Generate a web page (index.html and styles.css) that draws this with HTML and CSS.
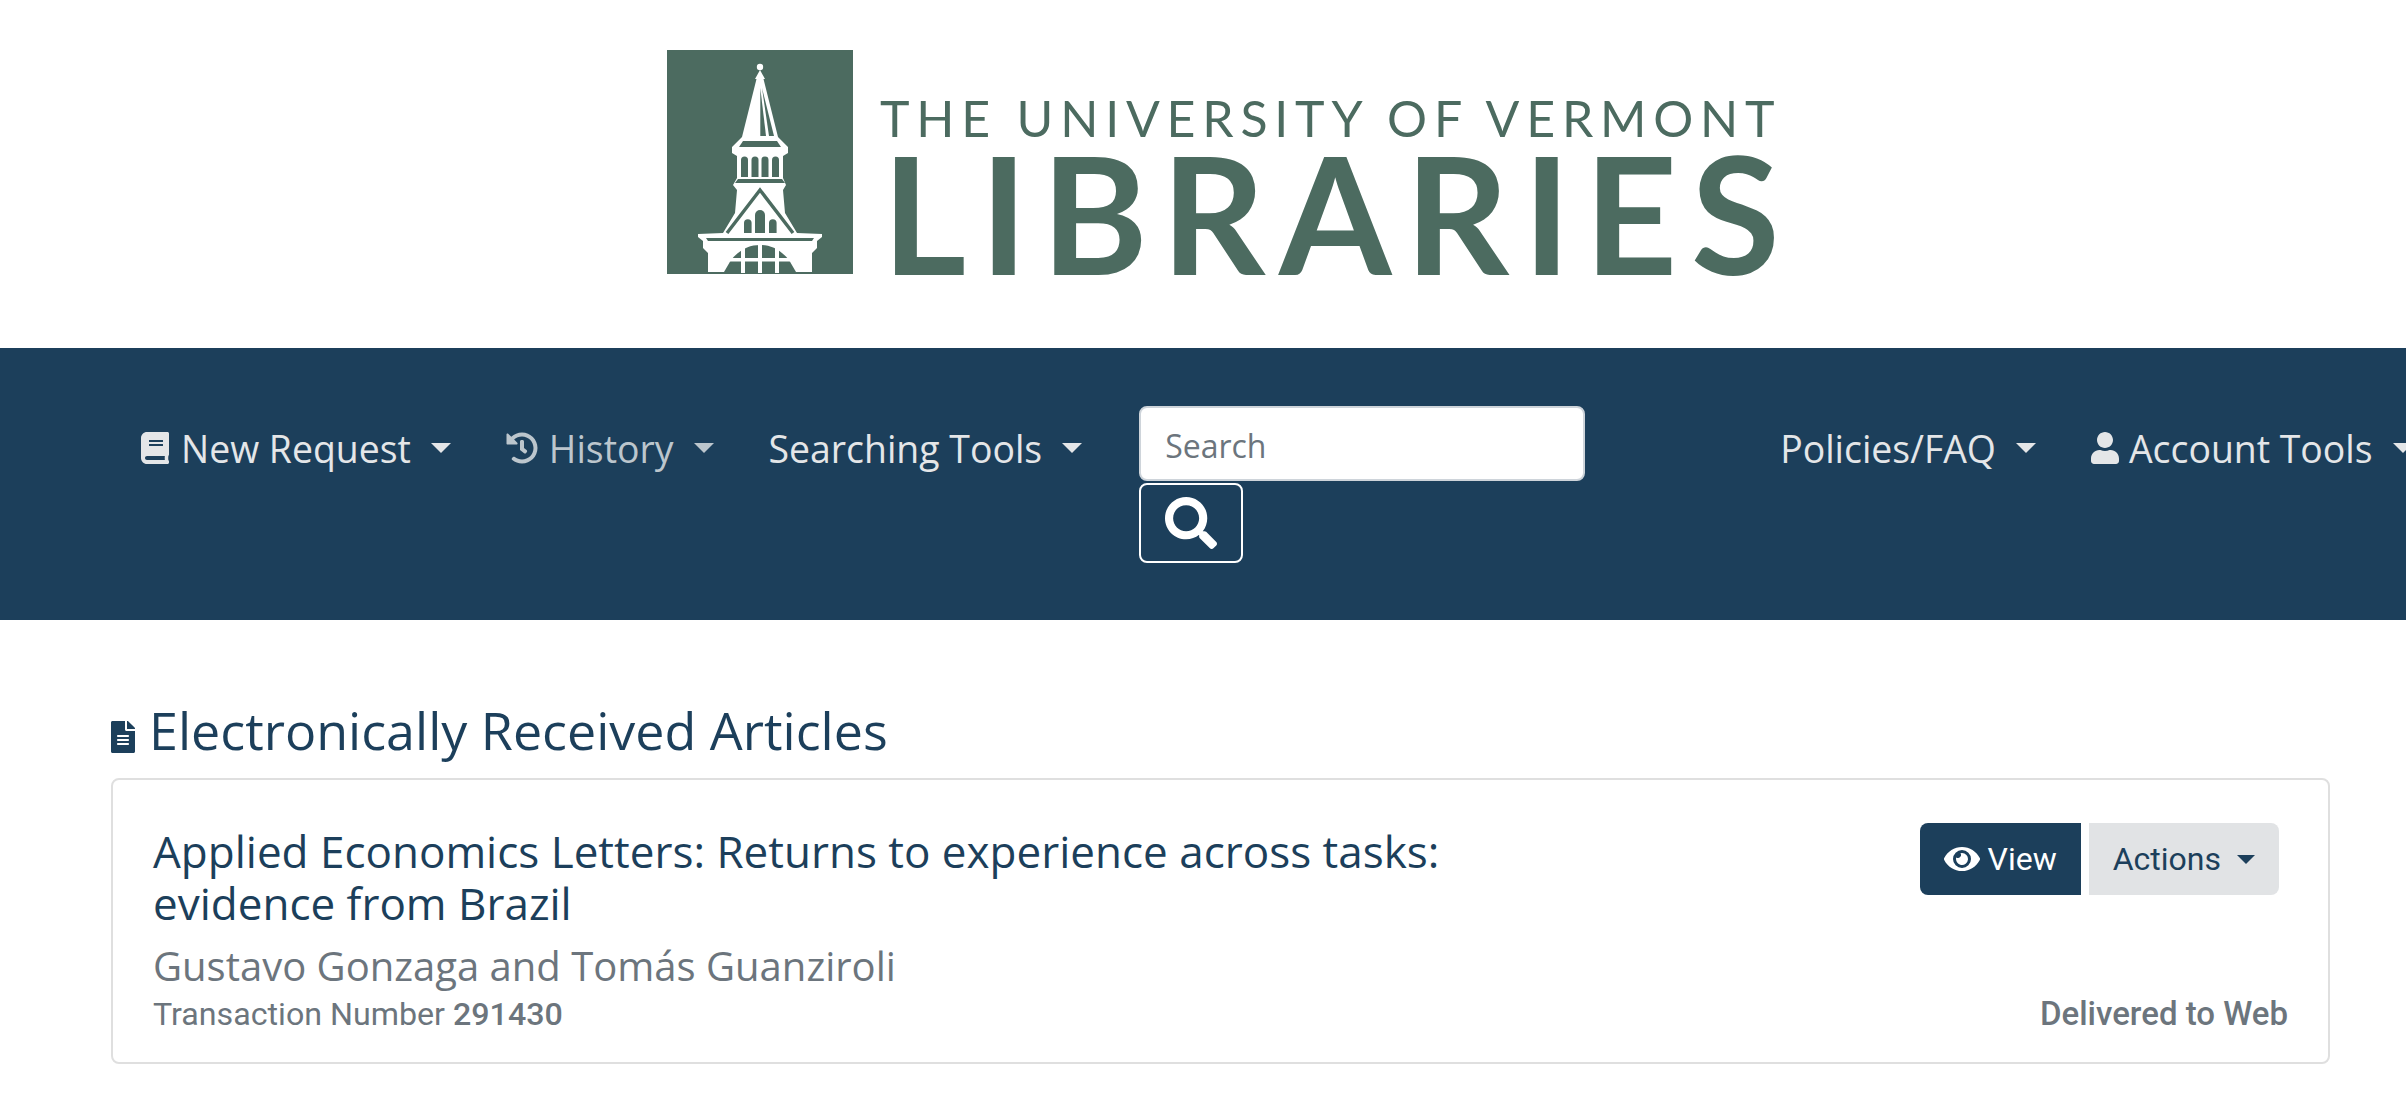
FILE: index.html
```html
<!DOCTYPE html>
<html lang="en">
<head>
    <meta charset="UTF-8">
    <meta name="viewport" content="width=device-width, initial-scale=1.0">
    <title>Electronically Received Articles</title>
    <link rel="stylesheet" href="styles.css">
</head>
<body>
    <div class="logo-bar">
        <svg class="logo-mark" viewBox="667 50 186 224" preserveAspectRatio="none">
            <rect x="667" y="50" width="186" height="224" fill="#4c6b60"/>
            <!-- tower silhouette -->
            <circle cx="760" cy="67" r="3.2" fill="#fff"/>
            <path fill="#fff" d="M760 70 L765 79 L763.5 79 L778 137 L788 147 L788 153 L783 156 L783 178 L786 185 L783 190 L785 213 L797 233 L822 234 L822 237 L817 241 L817 248 L812 253 L812 272 L708 272 L708 253 L703 248 L703 241 L698 237 L698 234 L723 233 L735 213 L737 190 L733 185 L737 178 L737 156 L732 153 L732 147 L742 137 L756.5 79 L755 79 Z"/>
            <!-- spire slivers and bands -->
            <g fill="#4c6b60">
                <path d="M760.3 88 L766 136 L760.3 136 Z"/>
                <path d="M762 88 L774 136 L769 136 Z"/>
                <path d="M743 141 L777 141 L781 147 L739 147 Z"/>
                <path d="M741 160 a3.5 3.5 0 0 1 7 0 V177 H741 Z"/>
                <path d="M751.5 160 a3.5 3.5 0 0 1 7 0 V177 H751.5 Z"/>
                <path d="M761.5 160 a3.5 3.5 0 0 1 7 0 V177 H761.5 Z"/>
                <path d="M772 160 a3.5 3.5 0 0 1 7 0 V177 H772 Z"/>
                <path d="M738 179 L782 179 L785 183 L735 183 Z"/>
                <path d="M744 233 V223 a3.8 3.8 0 0 1 7.6 0 V233 Z"/>
                <path d="M755 233 V215 a5 5 0 0 1 10 0 V233 Z"/>
                <path d="M769 233 V223 a3.8 3.8 0 0 1 7.6 0 V233 Z"/>
                <path d="M706 238 L814 238 L812 241 L708 241 Z"/>
                <path d="M731 260 C740 249 750 245 760 245 C770 245 780 249 789 260 L796 272 L724 272 Z"/>
            </g>
            <path d="M727 233 L760 190 L793 233" fill="none" stroke="#4c6b60" stroke-width="3.4"/>
            <g fill="#fff">
                <rect x="741" y="246" width="4" height="27"/>
                <rect x="758" y="244" width="4" height="29"/>
                <rect x="775" y="246" width="4" height="27"/>
                <rect x="730" y="258" width="60" height="3.5"/>
            </g>
        </svg>
        <div class="logo-text">
            <div class="logo-top">THE UNIVERSITY OF VERMONT</div>
            <div class="logo-main">LIBRARIES</div>
        </div>
    </div>

    <nav class="navbar">
        <a href="#new" class="nav-link">
            <svg class="icon book" viewBox="0 0 448 512"><path d="M448 360V24c0-13.3-10.7-24-24-24H96C43 0 0 43 0 96v320c0 53 43 96 96 96h328c13.3 0 24-10.7 24-24v-16c0-7.5-3.5-14.3-8.9-18.7-4.2-15.4-4.2-59.3 0-74.7 5.4-4.3 8.9-11.1 8.9-18.6zM128 134c0-3.3 2.7-6 6-6h212c3.3 0 6 2.7 6 6v20c0 3.3-2.7 6-6 6H134c-3.3 0-6-2.7-6-6v-20zm0 64c0-3.3 2.7-6 6-6h212c3.3 0 6 2.7 6 6v20c0 3.3-2.7 6-6 6H134c-3.3 0-6-2.7-6-6v-20zm253.4 250H96c-17.7 0-32-14.3-32-32 0-17.6 14.4-32 32-32h285.4c-1.9 17.1-1.9 46.9 0 64z"/></svg>
            New Request<span class="caret"></span>
        </a>
        <a href="#history" class="nav-link dim">
            <svg class="icon history" viewBox="0 0 512 512"><path d="M504 255.531c.253 136.64-111.18 248.372-247.82 248.468-59.015.042-113.223-20.53-155.822-54.911-11.077-8.94-11.905-25.541-1.839-35.607l11.267-11.267c8.609-8.609 22.353-9.551 31.891-1.984C173.062 425.135 212.781 440 256 440c101.705 0 184-82.311 184-184 0-101.705-82.311-184-184-184-48.814 0-93.149 18.969-126.068 49.932l50.754 50.754c10.08 10.08 2.941 27.314-11.313 27.314H24c-8.837 0-16-7.163-16-16V38.627c0-14.254 17.234-21.393 27.314-11.314l49.372 49.372C129.209 34.136 189.552 8 256 8c136.81 0 247.747 110.78 248 247.531zm-180.912 78.784l9.823-12.63c8.138-10.463 6.253-25.542-4.21-33.679L288 256.349V152c0-13.255-10.745-24-24-24h-16c-13.255 0-24 10.745-24 24v135.651l65.409 50.874c10.463 8.137 25.541 6.253 33.679-4.21z"/></svg>
            History<span class="caret"></span>
        </a>
        <a href="#tools" class="nav-link">Searching Tools<span class="caret"></span></a>
        <form class="search-form">
            <input type="text" class="search-input" placeholder="Search">
            <button type="button" class="search-btn">
                <svg viewBox="0 0 512 512"><path d="M505 442.7L405.3 343c-4.5-4.5-10.6-7-17-7H372c27.6-35.3 44-79.7 44-128C416 93.1 322.9 0 208 0S0 93.1 0 208s93.1 208 208 208c48.3 0 92.7-16.4 128-44v16.3c0 6.4 2.5 12.5 7 17l99.7 99.7c9.4 9.4 24.6 9.4 33.9 0l28.3-28.3c9.4-9.4 9.4-24.6.1-34zM208 336c-70.7 0-128-57.2-128-128 0-70.7 57.2-128 128-128 70.7 0 128 57.2 128 128 0 70.7-57.2 128-128 128z"/></svg>
            </button>
        </form>
        <a href="#faq" class="nav-link policies">Policies/FAQ<span class="caret"></span></a>
        <a href="#account" class="nav-link account">
            <svg class="icon user" viewBox="0 0 448 512"><path d="M224 256c70.7 0 128-57.3 128-128S294.7 0 224 0 96 57.3 96 128s57.3 128 128 128zm89.6 32h-16.7c-22.2 10.2-46.9 16-72.9 16s-50.6-5.8-72.9-16h-16.7C60.2 288 0 348.2 0 422.4V464c0 26.5 21.5 48 48 48h352c26.5 0 48-21.5 48-48v-41.6c0-74.2-60.2-134.4-134.4-134.4z"/></svg>
            Account Tools<span class="caret"></span>
        </a>
    </nav>

    <div class="main-content">
        <h1 class="section-title">
            <svg class="file-icon" viewBox="0 0 384 512"><path d="M224 136V0H24C10.7 0 0 10.7 0 24v464c0 13.3 10.7 24 24 24h336c13.3 0 24-10.7 24-24V160H248c-13.2 0-24-10.8-24-24zm64 236c0 6.6-5.4 12-12 12H108c-6.6 0-12-5.4-12-12v-8c0-6.6 5.4-12 12-12h168c6.6 0 12 5.4 12 12v8zm0-64c0 6.6-5.4 12-12 12H108c-6.6 0-12-5.4-12-12v-8c0-6.6 5.4-12 12-12h168c6.6 0 12 5.4 12 12v8zm0-72v8c0 6.6-5.4 12-12 12H108c-6.6 0-12-5.4-12-12v-8c0-6.6 5.4-12 12-12h168c6.6 0 12 5.4 12 12zm96-114.1v6.1H256V0h6.1c6.4 0 12.5 2.5 17 7l97.9 98c4.5 4.5 7 10.6 7 16.9z"/></svg>
            Electronically Received Articles
        </h1>
        <div class="card">
            <div class="card-info">
                <h2 class="card-title">Applied Economics Letters: Returns to experience across tasks:<br>evidence from Brazil</h2>
                <p class="card-author">Gustavo Gonzaga and Tomás Guanziroli</p>
                <p class="card-meta">Transaction Number <strong>291430</strong></p>
            </div>
            <div class="card-side">
                <div class="card-actions">
                    <a href="#view" class="btn btn-view">
                        <svg class="eye" viewBox="0 0 576 512"><path d="M572.52 241.4C518.29 135.59 410.93 64 288 64S57.68 135.64 3.48 241.41a32.35 32.35 0 0 0 0 29.19C57.71 376.41 165.07 448 288 448s230.32-71.64 284.52-177.41a32.35 32.35 0 0 0 0-29.19zM288 400a144 144 0 1 1 144-144 143.93 143.93 0 0 1-144 144zm0-240a95.31 95.31 0 0 0-25.31 3.79 47.85 47.85 0 0 1-66.9 66.9A95.78 95.78 0 1 0 288 160z"/></svg>
                        View
                    </a>
                    <a href="#actions" class="btn btn-actions">Actions<span class="caret"></span></a>
                </div>
                <div class="card-status">Delivered to Web</div>
            </div>
        </div>
    </div>
</body>
</html>
```

FILE: styles.css
```css
html, body {
    overflow-x: hidden;
}

body {
    margin: 0;
    padding: 0;
    font-family: "Open Sans", sans-serif;
    background-color: white;
    color: #1c3f5b;
}

.logo-bar {
    display: flex;
    height: 348px;
    box-sizing: border-box;
    padding: 50px 0 0 667px;
}

.logo-mark {
    width: 186px;
    height: 224px;
    flex-shrink: 0;
}

.logo-text {
    margin-left: 27px;
    font-family: Lato, sans-serif;
    color: #4c6b60;
    white-space: nowrap;
}

.logo-top {
    margin-top: 43px;
    font-size: 50px;
    line-height: 50px;
    letter-spacing: 6.8px;
}

.logo-main {
    margin: 3px 0 0 2px;
    font-size: 162px;
    line-height: 134px;
    font-weight: 700;
    letter-spacing: 13.5px;
}

.navbar {
    display: flex;
    align-items: flex-start;
    height: 272px;
    box-sizing: border-box;
    padding: 58px 0 0 141px;
    background-color: #1c3f5b;
    white-space: nowrap;
}

.nav-link {
    display: flex;
    align-items: center;
    height: 60px;
    margin: 12px 55px 0 0;
    color: #e4e6e8;
    font-size: 37.4px;
    text-decoration: none;
}

.nav-link.dim {
    color: #bcc6cd;
}

.caret {
    display: inline-block;
    margin-left: 20px;
    border-top: 10px solid currentColor;
    border-left: 10px solid transparent;
    border-right: 10px solid transparent;
}

.icon {
    fill: currentColor;
    flex-shrink: 0;
}

.icon.book {
    width: 28px;
    height: 32px;
    margin-right: 12px;
}

.icon.history {
    width: 32px;
    height: 32px;
    margin-right: 11px;
}

.icon.user {
    width: 28px;
    height: 32px;
    margin-right: 10px;
}

.search-form {
    display: flex;
    flex-direction: column;
    align-items: flex-start;
    margin-left: 2px;
}

.search-input {
    width: 446px;
    height: 75px;
    box-sizing: border-box;
    padding: 4px 24px 0 24px;
    border: 2px solid #ced4da;
    border-radius: 8px;
    font-family: "Open Sans", sans-serif;
    font-size: 32px;
    background-color: white;
}

.search-input::placeholder {
    color: #6c757d;
}

.search-btn {
    width: 104px;
    height: 80px;
    margin-top: 2px;
    padding: 0;
    display: flex;
    align-items: center;
    justify-content: center;
    background: none;
    border: 2px solid white;
    border-radius: 8px;
}

.search-btn svg {
    width: 52px;
    height: 52px;
    fill: white;
}

.nav-link.policies {
    margin-left: 195px;
}

.main-content {
    padding: 74px 76px 0 111px;
}

.section-title {
    display: flex;
    align-items: center;
    margin: 0 0 12px 0;
    font-size: 52px;
    font-weight: 400;
    line-height: 72px;
}

.file-icon {
    width: 24px;
    height: 32px;
    margin: 14px 14px 0 0;
    fill: #1c3f5b;
}

.card {
    display: flex;
    justify-content: space-between;
    height: 286px;
    box-sizing: border-box;
    padding: 40px 40px 0 40px;
    border: 2px solid #dfdfdf;
    border-radius: 8px;
}

.card-info {
    padding-top: 5px;
}

.card-title {
    margin: 0;
    font-size: 44px;
    font-weight: 400;
    line-height: 52px;
}

.card-author {
    margin: 8px 0 0 0;
    font-size: 40px;
    line-height: 58px;
    color: #6c757d;
}

.card-meta {
    margin: 0;
    font-family: Roboto, sans-serif;
    font-size: 32.2px;
    line-height: 38px;
    color: #6c757d;
}

.card-meta strong {
    font-weight: 500;
}

.card-side {
    display: flex;
    flex-direction: column;
    align-items: flex-end;
    justify-content: space-between;
    padding-bottom: 29px;
}

.card-actions {
    display: flex;
    gap: 8px;
    margin: 3px 9px 0 0;
}

.btn {
    display: flex;
    align-items: center;
    height: 72px;
    box-sizing: border-box;
    font-family: Roboto, sans-serif;
    font-size: 32px;
    text-decoration: none;
}

.btn-view {
    padding: 0 24px;
    background-color: #1c3f5b;
    color: white;
    border-radius: 8px 0 0 8px;
}

.eye {
    width: 36px;
    height: 32px;
    margin-right: 8px;
    fill: white;
}

.btn-actions {
    padding: 0 24px;
    background-color: #e1e3e5;
    color: #1c3f5b;
    border-radius: 0 8px 8px 0;
}

.btn-actions .caret {
    margin-left: 16px;
    border-top-width: 9px;
    border-left-width: 9px;
    border-right-width: 9px;
}

.card-status {
    font-family: Roboto, sans-serif;
    font-size: 33px;
    font-weight: 500;
    color: #6c757d;
}
```
